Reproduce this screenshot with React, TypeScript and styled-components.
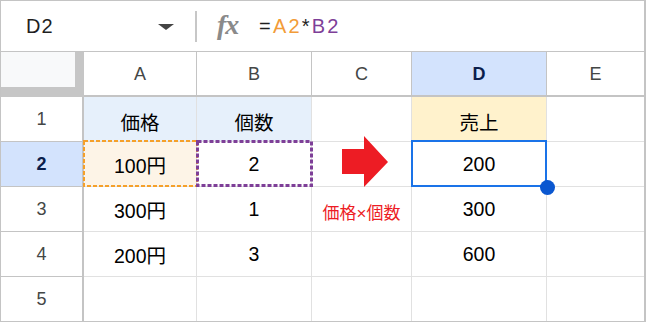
import React from "react";
import styled, { createGlobalStyle } from "styled-components";

const Global = createGlobalStyle`
  html, body { margin: 0; padding: 0; background: #ffffff; }
  body { font-family: "Liberation Sans", "Noto Sans CJK JP", sans-serif; }
`;

const FONT = `"Liberation Sans", "Noto Sans CJK JP", sans-serif`;
const HEAD_LINE = "#c4c4c4";
const BODY_LINE = "#e1e1e1";

const Frame = styled.div`
  width: 646px;
  height: 322px;
  box-sizing: border-box;
  border-top: 1px solid ${HEAD_LINE};
  border-left: 1px solid ${HEAD_LINE};
  border-right: 2px solid ${HEAD_LINE};
  border-bottom: 1px solid ${HEAD_LINE};
  display: flex;
  flex-direction: column;
  overflow: hidden;
  font-family: ${FONT};
`;

const FormulaBar = styled.div`
  height: 51px;
  box-sizing: border-box;
  border-bottom: 1px solid ${HEAD_LINE};
  display: flex;
  align-items: center;
`;

const NameBox = styled.div`
  width: 194px;
  box-sizing: border-box;
  padding: 0 21px 0 25px;
  display: flex;
  align-items: center;
  justify-content: space-between;
  font-size: 20px;
  color: #1f1f1f;
  letter-spacing: 1px;
`;

const Caret = styled.span`
  width: 0;
  height: 0;
  border-left: 8px solid transparent;
  border-right: 8px solid transparent;
  border-top: 6px solid #444;
  margin-top: 1px;
`;

const Divider = styled.div`
  width: 2px;
  height: 31px;
  background: #c7c7c7;
`;

const Fx = styled.span`
  margin-left: 20px;
  width: 28px;
  font-family: "Liberation Serif", "DejaVu Serif", serif;
  font-style: italic;
  font-weight: bold;
  font-size: 28px;
  line-height: 1;
  color: #8a8a8a;
  letter-spacing: -1px;
  margin-top: -3px;
`;

const Formula = styled.div`
  margin-left: 14px;
  font-size: 20px;
  letter-spacing: 2.2px;
  color: #1f1f1f;
`;

const Ref = styled.span<{ $c: string }>`
  color: ${(p) => p.$c};
`;

const Grid = styled.div`
  display: grid;
  grid-template-columns: 83px 113px 115px 100px 135px 97px;
  grid-template-rows: 45px 45px 45px 45px 45px 44px;
  flex: 1;
`;

const Corner = styled.div`
  box-sizing: border-box;
  background: #f8f9fa;
  border-right: 9px solid #c6c6c6;
  border-bottom: 10px solid #c6c6c6;
`;

const ColHead = styled.div<{ $sel?: boolean; $last?: boolean }>`
  box-sizing: border-box;
  display: flex;
  align-items: center;
  justify-content: center;
  border-bottom: 2px solid ${HEAD_LINE};
  border-right: ${(p) => (p.$last ? "0" : `1px solid ${HEAD_LINE}`)};
  background: ${(p) => (p.$sel ? "#d3e3fd" : "#ffffff")};
  color: ${(p) => (p.$sel ? "#0b1e4c" : "#444746")};
  font-weight: ${(p) => (p.$sel ? "bold" : "normal")};
  font-size: 18px;
  padding-top: 1px;
`;

const RowHead = styled.div<{ $sel?: boolean; $last?: boolean }>`
  box-sizing: border-box;
  display: flex;
  align-items: center;
  justify-content: center;
  border-right: 2px solid ${HEAD_LINE};
  border-bottom: ${(p) => (p.$last ? "0" : `1px solid ${HEAD_LINE}`)};
  background: ${(p) => (p.$sel ? "#d3e3fd" : "#ffffff")};
  color: ${(p) => (p.$sel ? "#0b1e4c" : "#444746")};
  font-weight: ${(p) => (p.$sel ? "bold" : "normal")};
  font-size: 18px;
`;

const Cell = styled.div<{ $bg?: string; $last?: boolean; $lastCol?: boolean; $color?: string; $size?: number; $dy?: number }>`
  position: relative;
  box-sizing: border-box;
  display: flex;
  align-items: center;
  justify-content: center;
  background: ${(p) => p.$bg || "#ffffff"};
  border-right: ${(p) => (p.$lastCol ? "0" : `1px solid ${BODY_LINE}`)};
  border-bottom: ${(p) => (p.$last ? "0" : `1px solid ${BODY_LINE}`)};
  color: ${(p) => p.$color || "#000000"};
  font-size: ${(p) => p.$size || 19.5}px;
  padding-top: ${(p) => p.$dy || 0}px;
`;

const Overlay = styled.svg`
  position: absolute;
  overflow: visible;
  pointer-events: none;
  z-index: 2;
`;

const SelBox = styled.div`
  position: absolute;
  left: -1px;
  top: -2px;
  right: -1px;
  bottom: -1px;
  border: 2px solid #1a73e8;
  z-index: 3;
  pointer-events: none;
`;

const Handle = styled.div`
  position: absolute;
  right: -9px;
  bottom: -9px;
  width: 15px;
  height: 15px;
  border-radius: 50%;
  background: #0b57d0;
  z-index: 4;
`;

const Ants: React.FC<{ w: number; h: number; color: string; sw: number; dash: string }> = ({ w, h, color, sw, dash }) => (
  <Overlay width={w} height={h} style={{ left: -1, top: -2 }}>
    <rect x={sw / 2} y={sw / 2} width={w - sw} height={h - sw} fill="none" stroke={color} strokeWidth={sw} strokeDasharray={dash} />
  </Overlay>
);

const Arrow: React.FC = () => (
  <Overlay width={48} height={52} style={{ left: 29, top: -6 }}>
    <polygon points="1,13 23,13 23,0 47,26 23,51 23,38 1,38" fill="#ed1c24" />
  </Overlay>
);

const cols = ["A", "B", "C", "D", "E"];

export default function App() {
  return (
    <>
      <Global />
      <Frame>
        <FormulaBar>
          <NameBox>
            <span>D2</span>
            <Caret />
          </NameBox>
          <Divider />
          <Fx>fx</Fx>
          <Formula>
            =<Ref $c="#f29c38">A2</Ref>*<Ref $c="#7e3f98">B2</Ref>
          </Formula>
        </FormulaBar>
        <Grid>
          <Corner />
          {cols.map((c, i) => (
            <ColHead key={c} $sel={c === "D"} $last={i === cols.length - 1}>
              {c}
            </ColHead>
          ))}

          <RowHead>1</RowHead>
          <Cell $bg="#e6f0fb" $dy={4}>価格</Cell>
          <Cell $bg="#e6f0fb" $dy={4}>個数</Cell>
          <Cell />
          <Cell $bg="#fff2cc" $dy={4}>売上</Cell>
          <Cell $lastCol />

          <RowHead $sel>2</RowHead>
          <Cell $bg="#fdf4e7">
            100円
            <Ants w={115} h={47} color="#f5a02a" sw={2} dash="4 2" />
          </Cell>
          <Cell>
            2
            <Ants w={117} h={47} color="#7e3f98" sw={3} dash="4 2" />
          </Cell>
          <Cell>
            <Arrow />
          </Cell>
          <Cell>
            200
            <SelBox />
            <Handle />
          </Cell>
          <Cell $lastCol />

          <RowHead>3</RowHead>
          <Cell>300円</Cell>
          <Cell>1</Cell>
          <Cell $color="#ed1c24" $size={17} $dy={4}>価格×個数</Cell>
          <Cell>300</Cell>
          <Cell $lastCol />

          <RowHead>4</RowHead>
          <Cell>200円</Cell>
          <Cell>3</Cell>
          <Cell />
          <Cell>600</Cell>
          <Cell $lastCol />

          <RowHead $last>5</RowHead>
          <Cell $last />
          <Cell $last />
          <Cell $last />
          <Cell $last />
          <Cell $last $lastCol />
        </Grid>
      </Frame>
    </>
  );
}
